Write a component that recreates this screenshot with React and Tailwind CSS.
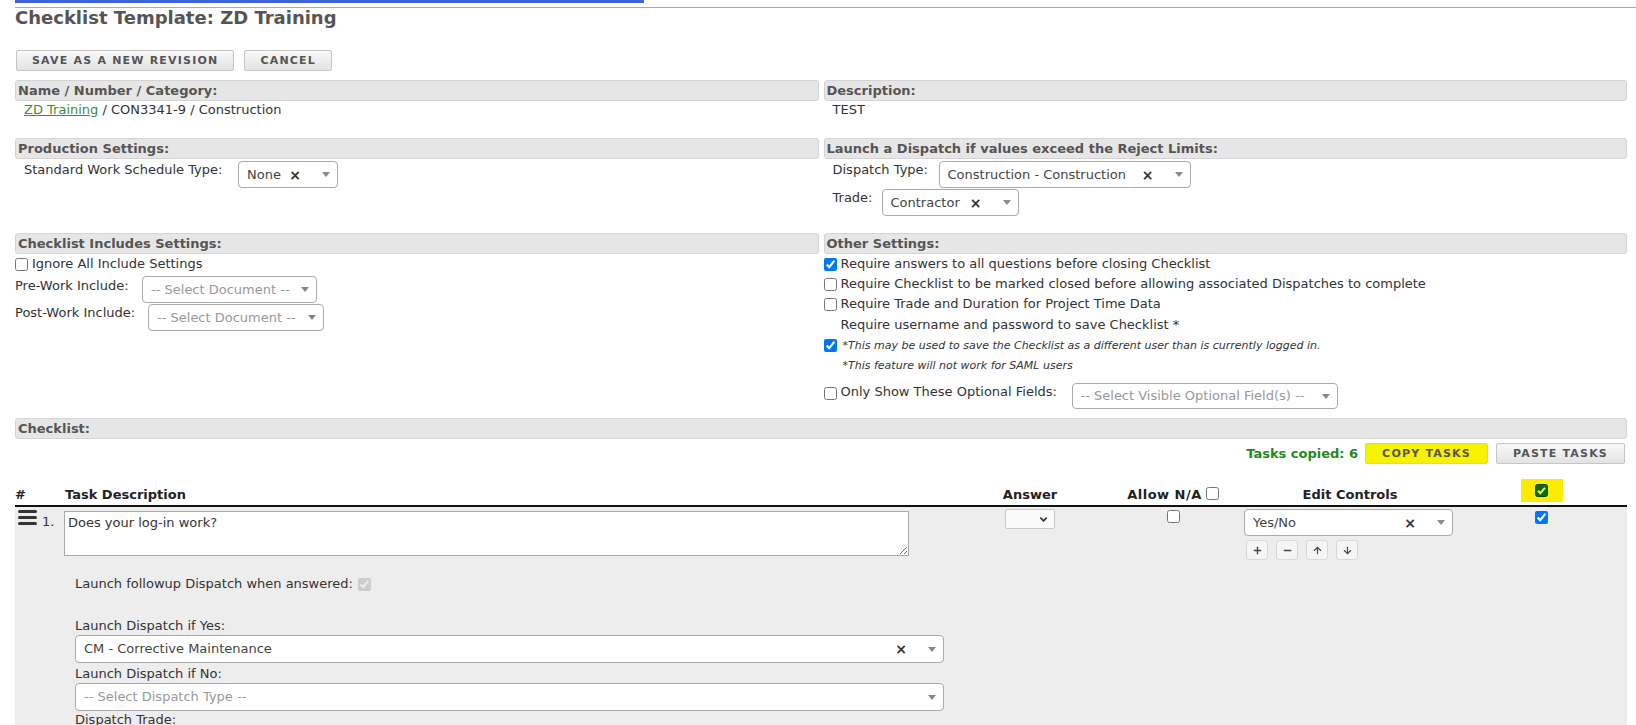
import { Plus, Minus, ArrowUp, ArrowDown, ChevronDown } from 'lucide-react'

function Header({ children, className = '' }) {
  return (
    <div className={`h-[21px] flex items-center pl-[2px] bg-[#e6e6e6] border border-[#d4d4d4] rounded-[3px] font-bold text-[#555] ${className}`}>
      {children}
    </div>
  )
}

function Button({ children, className = '' }) {
  return (
    <button className={`h-[21px] px-[15px] border border-[#c6c6c6] rounded-[2px] bg-linear-to-b from-[#f8f8f8] to-[#e3e3e3] text-[11px] leading-none font-bold tracking-[1.2px] text-[#555] ${className}`}>
      {children}
    </button>
  )
}

function Select2({ value, placeholder, clearable = true, className = '' }) {
  return (
    <div className={`flex items-center shrink-0 bg-white border border-[#aaa] rounded-[4px] pl-[8px] pr-[7px] ${className}`}>
      <span className={`flex-1 min-w-0 truncate whitespace-nowrap ${value ? 'text-[#444]' : 'text-[#999]'}`}>
        {value || placeholder}
      </span>
      {value && clearable && (
        <span className="w-[12px] text-center text-[#333] font-bold text-[14px] leading-none mr-[17px]">×</span>
      )}
      <svg width="8" height="5" viewBox="0 0 8 5" className="shrink-0 ml-[4px]">
        <path d="M0 0h8L4 5z" fill="#888" />
      </svg>
    </div>
  )
}

function Check({ checked = false, disabled = false }) {
  return <input type="checkbox" defaultChecked={checked} disabled={disabled} className="shrink-0 w-[13px] h-[13px]" />
}

function EditButton({ children }) {
  return (
    <div className="w-[22px] h-[20px] flex items-center justify-center border border-[#d8d8d8] rounded-[3px] bg-[#f5f5f5] text-[#444]">
      {children}
    </div>
  )
}

export default function App() {
  return (
    <div className="w-full min-h-[725px] bg-white text-[13px] leading-[16px] text-[#333] font-['DejaVu_Sans',Verdana,sans-serif]">
      {/* top tab strip */}
      <div className="pl-[15px]">
        <div className="w-[629px] h-[3px] bg-[#4063d8]" />
        <div className="mt-[4px] h-px bg-[#a8a8a8]" />
      </div>

      <div className="pl-[15px] pr-[9px]">
        <h1 className="text-[18px] leading-[20px] font-bold text-[#555]">Checklist Template: ZD Training</h1>

        <div className="mt-[22px] ml-[1px] flex gap-[10px]">
          <Button>SAVE AS A NEW REVISION</Button>
          <Button>CANCEL</Button>
        </div>

        {/* Name / Description */}
        <div className="mt-[9px] grid grid-cols-2 gap-x-[5px]">
          <div>
            <Header>Name / Number / Category:</Header>
            <div className="pl-[9px] mt-[1px]">
              <a href="#" className="text-[#3a8f3a] underline">ZD Training</a> / CON3341-9 / Construction
            </div>
          </div>
          <div>
            <Header>Description:</Header>
            <div className="pl-[9px] mt-[1px]">TEST</div>
          </div>
        </div>

        {/* Production / Launch dispatch */}
        <div className="mt-[20px] grid grid-cols-2 gap-x-[5px]">
          <div>
            <Header>Production Settings:</Header>
            <div className="pl-[9px] mt-[2px] flex items-start gap-[8px]">
              <span className="mt-[1px] w-[206px] whitespace-nowrap">Standard Work Schedule Type:</span>
              <Select2 value="None" className="w-[100px] h-[27px]" />
            </div>
          </div>
          <div>
            <Header>Launch a Dispatch if values exceed the Reject Limits:</Header>
            <div className="pl-[9px] mt-[2px] flex flex-col gap-[1px]">
              <div className="flex items-start gap-[6px]">
                <span className="mt-[1px] w-[100px] whitespace-nowrap">Dispatch Type:</span>
                <Select2 value="Construction - Construction" className="w-[252px] h-[27px]" />
              </div>
              <div className="flex items-start gap-[6px]">
                <span className="mt-[1px] w-[43px]">Trade:</span>
                <Select2 value="Contractor" className="w-[137px] h-[27px]" />
              </div>
            </div>
          </div>
        </div>

        {/* Includes / Other */}
        <div className="mt-[17px] grid grid-cols-2 gap-x-[5px]">
          <div>
            <Header>Checklist Includes Settings:</Header>
            <div className="h-[20px] flex items-center gap-[4px]">
              <Check />
              <span>Ignore All Include Settings</span>
            </div>
            <div className="mt-[2px] flex items-start gap-[6px]">
              <span className="mt-[2px] w-[121px] whitespace-nowrap">Pre-Work Include:</span>
              <Select2 placeholder="-- Select Document --" className="w-[175px] h-[27px]" />
            </div>
            <div className="mt-[1px] flex items-start gap-[6px]">
              <span className="mt-[1px] w-[127px] whitespace-nowrap">Post-Work Include:</span>
              <Select2 placeholder="-- Select Document --" className="w-[176px] h-[27px]" />
            </div>
          </div>
          <div>
            <Header>Other Settings:</Header>
            <div className="h-[20px] flex items-center gap-[4px]">
              <Check checked />
              <span>Require answers to all questions before closing Checklist</span>
            </div>
            <div className="h-[20px] flex items-center gap-[4px]">
              <Check />
              <span>Require Checklist to be marked closed before allowing associated Dispatches to complete</span>
            </div>
            <div className="h-[20px] flex items-center gap-[4px]">
              <Check />
              <span>Require Trade and Duration for Project Time Data</span>
            </div>
            <div className="h-[21px] flex items-center pl-[17px]">Require username and password to save Checklist *</div>
            <div className="h-[21px] flex items-center gap-[6px]">
              <Check checked />
              <span className="italic text-[11px]">*This may be used to save the Checklist as a different user than is currently logged in.</span>
            </div>
            <div className="h-[19px] flex items-center pl-[19px] italic text-[11px]">*This feature will not work for SAML users</div>
            <div className="mt-[8px] flex items-start">
              <span className="mt-[4px]"><Check /></span>
              <span className="mt-[1px] ml-[4px] mr-[8px] w-[223px] whitespace-nowrap">Only Show These Optional Fields:</span>
              <Select2 placeholder="-- Select Visible Optional Field(s) --" className="w-[266px] h-[26px]" />
            </div>
          </div>
        </div>

        {/* Checklist */}
        <Header className="mt-[9px]">Checklist:</Header>
        <div className="mt-[4px] flex justify-end items-center gap-[8px] pr-[2px]">
          <span className="font-bold text-[#1f8a1f] mr-[-1px]">Tasks copied: 6</span>
          <Button className="!bg-none !bg-[#f6f200] !border-[#d9d67a] px-[16px]">COPY TASKS</Button>
          <Button className="px-[16px]">PASTE TASKS</Button>
        </div>

        {/* table header */}
        <div className="mt-[13px] flex h-[30px] border-b-2 border-[#111] font-bold text-[#222]">
          <div className="w-[49px] flex items-end pb-[2px]">#</div>
          <div className="w-[894px] flex items-end pb-[2px] pl-[1px]">Task Description</div>
          <div className="w-[144px] flex items-end justify-center pb-[2px]">Answer</div>
          <div className="w-[142px] flex items-end justify-center pb-[2px]">
            <span className="tracking-[0.5px]">Allow N/A</span>
            <span className="ml-[4px] mb-[3px] flex"><Check /></span>
          </div>
          <div className="w-[212px] flex items-end justify-center pb-[2px]">Edit Controls</div>
          <div className="w-[171px] flex items-end justify-center pb-[3px]">
            <div className="w-[42px] h-[23px] bg-[#fbec00] flex items-center justify-center">
              <svg width="13" height="13" viewBox="0 0 13 13">
                <rect x="0.5" y="0.5" width="12" height="12" rx="2" fill="#0b6a1c" stroke="#0a4d14" />
                <path d="M3 6.8l2.3 2.4L10 3.8" fill="none" stroke="#f4ee3a" strokeWidth="2" />
              </svg>
            </div>
          </div>
        </div>

        {/* task row */}
        <div className="flex bg-[#ededed] pb-[20px]">
          <div className="w-[49px] flex items-start pl-[3px] gap-[5px] mt-[3px]">
            <div className="flex flex-col gap-[3px]">
              <div className="w-[19px] h-[3px] rounded-full bg-[#333]" />
              <div className="w-[19px] h-[3px] rounded-full bg-[#333]" />
              <div className="w-[19px] h-[3px] rounded-full bg-[#333]" />
            </div>
            <span className="mt-[4px]">1.</span>
          </div>
          <div className="w-[894px]">
            <textarea
              defaultValue="Does your log-in work?"
              className="block mt-[4px] w-[845px] h-[45px] bg-white border border-[#a9a9a9] px-[3px] py-[3px] text-[#333]"
            />
            <div className="pl-[11px]">
              <div className="mt-[20px] flex items-center gap-[5px] h-[16px]">
                <span>Launch followup Dispatch when answered:</span>
                <Check checked disabled />
              </div>
              <div className="mt-[26px]">Launch Dispatch if Yes:</div>
              <Select2 value="CM - Corrective Maintenance" className="mt-[1px] w-[869px] h-[28px]" />
              <div className="mt-[3px]">Launch Dispatch if No:</div>
              <Select2 placeholder="-- Select Dispatch Type --" className="mt-[1px] w-[869px] h-[28px]" />
              <div className="mt-[1px]">Dispatch Trade:</div>
              <Select2 placeholder="-- Select Trade --" className="mt-[1px] w-[869px] h-[28px]" />
            </div>
          </div>
          <div className="w-[144px] flex justify-center items-start">
            <div className="mt-[2px] w-[50px] h-[20px] border border-[#c8c8c8] rounded-[2px] bg-[#fafafa] flex items-center justify-end pr-[5px]">
              <ChevronDown size={11} strokeWidth={3.5} color="#333" />
            </div>
          </div>
          <div className="w-[142px] flex justify-center items-start">
            <span className="mt-[3px] flex"><Check /></span>
          </div>
          <div className="w-[212px]">
            <Select2 value="Yes/No" className="mt-[2px] w-[209px] h-[27px]" />
            <div className="mt-[4px] ml-[2px] flex gap-[8px]">
              <EditButton><Plus size={11} strokeWidth={3} /></EditButton>
              <EditButton><Minus size={11} strokeWidth={3} /></EditButton>
              <EditButton><ArrowUp size={11} strokeWidth={2.5} /></EditButton>
              <EditButton><ArrowDown size={11} strokeWidth={2.5} /></EditButton>
            </div>
          </div>
          <div className="w-[171px] flex justify-center items-start">
            <span className="mt-[4px] flex"><Check checked /></span>
          </div>
        </div>
      </div>
    </div>
  )
}
